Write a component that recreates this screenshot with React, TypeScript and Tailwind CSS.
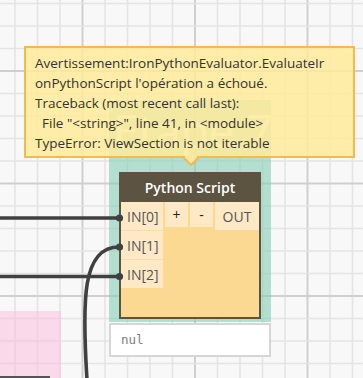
import React from 'react';

const font = { fontFamily: '"Open Sans", "Noto Sans", sans-serif' };

// grid lines of the canvas
const GridLines = () => {
  const lines: React.ReactNode[] = [];
  for (let i = 0; i < 17; i++) {
    const x = 15 + i * 22.5;
    const major = i % 5 === 3;
    lines.push(
      <line key={'v' + i} x1={x} y1={0} x2={x} y2={378} stroke={major ? '#cfcfcf' : '#e4e4e4'} strokeWidth={major ? 2 : 1.6} />
    );
  }
  for (let i = 0; i < 17; i++) {
    const y = 3.5 + i * 22.5;
    const major = i % 5 === 3;
    lines.push(
      <line key={'h' + i} x1={0} y1={y} x2={363} y2={y} stroke={major ? '#cfcfcf' : '#e4e4e4'} strokeWidth={major ? 2 : 1.6} />
    );
  }
  return (
    <svg className="absolute inset-0" width={363} height={378}>
      {lines}
    </svg>
  );
};

// wires only span the area left of the node
const Wires = () => (
  <svg className="absolute left-0 top-0 z-20 pointer-events-none" width={124} height={378}>
    <g stroke="#404040" strokeWidth={3.6} fill="none" strokeLinecap="butt">
      <line x1={0} y1={218} x2={119} y2={218} />
      <line x1={0} y1={276.5} x2={119} y2={276.5} />
      <path d="M119 247 C 82 247, 82 300, 87 380" />
    </g>
    <g fill="#404040">
      <circle cx={119.5} cy={218} r={3.6} />
      <circle cx={119.5} cy={247} r={3.6} />
      <circle cx={119.5} cy={276.5} r={3.6} />
    </g>
  </svg>
);

const Port = ({ label }: { label: string }) => (
  <div className="h-[28px] bg-[#fde9c6] flex items-center pl-[6px] text-[14px] text-[#555555]">{label}</div>
);

export default function App() {
  return (
    <div className="relative w-[363px] h-[378px] overflow-hidden bg-[#f8f8f8]" style={font}>
      <GridLines />

      {/* pink group, lower left */}
      <div className="absolute left-0 top-[311px] w-[61px] h-[70px] bg-[rgba(250,188,220,0.52)]" />
      <div className="absolute left-0 top-[376px] w-[50px] h-[4px] bg-[#555555]" />

      {/* teal group + its title, mostly hidden by the tooltip */}
      <div className="absolute left-[109px] top-[100px] w-[162px] h-[222px] bg-[rgba(133,206,181,0.6)]" />
      <div className="absolute left-[113px] top-[102px] h-[56px] text-[46px] leading-[56px] text-white whitespace-nowrap">Etape 7</div>

      {/* preview box */}
      <div className="absolute left-[109px] top-[323px] w-[162px] h-[34px] bg-white border-2 border-[#d6d6d6] flex items-center pl-[10px]">
        <span className="text-[12.5px] text-[#808080]" style={{ fontFamily: '"DejaVu Sans Mono", monospace' }}>nul</span>
      </div>

      <Wires />

      {/* Python Script node */}
      <div className="absolute left-[119px] top-[172px] w-[142px] z-10">
        <div className="h-[30px] bg-[#5c5441] flex items-center justify-center text-white text-[14px] font-semibold">
          Python Script
        </div>
        <div className="h-[117px] bg-[#fcd993] border-2 border-t-0 border-[#5c5441] flex">
          <div className="w-[44px] flex flex-col gap-px bg-[#fcdca6] self-start">
            <Port label="IN[0]" />
            <Port label="IN[1]" />
            <Port label="IN[2]" />
          </div>
          <div className="flex items-start ml-[2px] gap-[2px]">
            <div className="w-[23px] h-[25px] bg-[#fde9c6] flex items-center justify-center text-[14px] text-[#222222]">+</div>
            <div className="w-[23px] h-[25px] bg-[#fde9c6] flex items-center justify-center text-[14px] text-[#222222]">-</div>
            <div className="w-[44px] h-[28px] bg-[#fde9c6] flex items-center justify-center text-[14px] text-[#555555]">OUT</div>
          </div>
        </div>
      </div>

      {/* warning tooltip */}
      <div className="absolute left-[24px] top-[46px] w-[331px] h-[112px] z-30 border-2 border-[#f4b94f] bg-[rgba(253,234,156,0.88)] pl-[9px] pt-[5px] text-[13.5px] leading-[20px] text-[#333333] whitespace-pre">
        {'Avertissement:IronPythonEvaluator.EvaluateIr\nonPythonScript l\'opération a échoué.\nTraceback (most recent call last):\n  File "<string>", line 41, in <module>\nTypeError: ViewSection is not iterable'}
      </div>
      <svg className="absolute left-[183px] top-[156px] z-30" width={16} height={10}>
        <path d="M0 1 L8 9 L16 1" fill="rgba(253,234,156,0.88)" stroke="#f4b94f" strokeWidth={2} />
        <rect x={2} y={0} width={12} height={1.5} fill="#fdea9c" />
      </svg>
    </div>
  );
}
